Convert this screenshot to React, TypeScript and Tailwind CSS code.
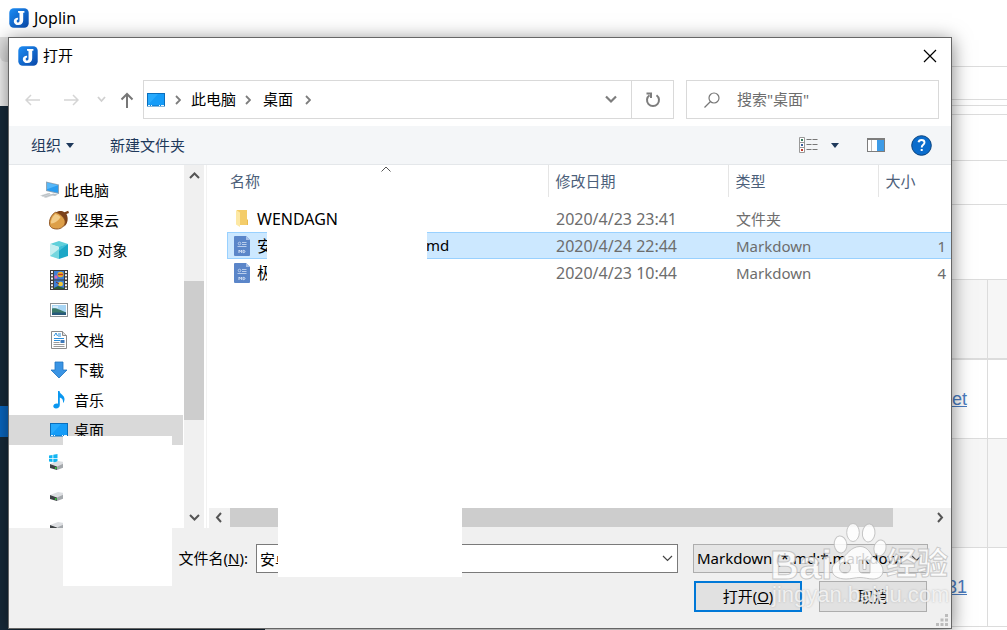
import React from "react";

const sans = "font-['Noto_Sans','Noto_Sans_CJK_SC',sans-serif]";

function JoplinIcon() {
  return (
    <svg width="20" height="20" viewBox="0 0 20 20" className="shrink-0" aria-hidden="true">
      <defs>
        <linearGradient id="jop" x1="0" y1="0" x2="1" y2="1">
          <stop offset="0" stopColor="#1c8df5" />
          <stop offset="1" stopColor="#0a48a8" />
        </linearGradient>
      </defs>
      <rect x="0.3" y="0.3" width="19.4" height="19.4" rx="4.5" fill="url(#jop)" />
      <path d="M9 3h6.400v1.800h-1.200v7.400c0 3.100-1.900 4.900-4.700 4.900-2.900 0-4.700-1.500-4.700-3.900 0-2.300 2-3.700 4.300-3.500v1.800c-.9.1-1.400.6-1.400 1.500 0 1 .6 1.500 1.400 1.500 1 0 1.400-.7 1.400-2V5.400c0-.4-.2-.6-.6-.6H9z" fill="#fff" />
    </svg>
  );
}

function DesktopIcon() {
  return (
    <svg width="18" height="14" viewBox="0 0 18 14" className="shrink-0" aria-hidden="true">
      <rect x="0.5" y="0.5" width="17" height="12.500" fill="#159cf8" stroke="#0a6ebc" />
      <path d="M1 12V1h10z" fill="#2fb0ff" opacity=".7" />
      <path d="M1 12.500h2M4 12.500h1M12 12.500h1M14 12.500h3" stroke="#e8f6ff" strokeWidth="1" />
    </svg>
  );
}

function Chevron({ d = "M1 1l4 4-4 4", w = 6, h = 10, c = "#7d7d7d", s = 1.8 }: { d?: string; w?: number; h?: number; c?: string; s?: number }) {
  return (
    <svg width={w} height={h} viewBox={`0 0 ${w} ${h}`} fill="none" stroke={c} strokeWidth={s} className="shrink-0" aria-hidden="true">
      <path d={d} />
    </svg>
  );
}

function ComputerIcon() {
  return (
    <svg width="20" height="18" viewBox="0 0 20 18" aria-hidden="true">
      <path d="M6 .5l13 3v9.500L6 10z" fill="#8fa5b6" />
      <path d="M7 1.700l11 2.600v7.500L7 9.200z" fill="#2a9df0" />
      <path d="M7 1.700l11 2.600-11 4z" fill="#58b8f8" />
      <path d="M0 14.500l8-2.500 6 2-8 3z" fill="#d3d7da" />
      <path d="M2 15l8-2.600M4.500 16l8-2.500" stroke="#aab0b5" strokeWidth=".6" />
      <path d="M13 12.500l5 1-3 1.500-4-1z" fill="#b7bfc6" />
    </svg>
  );
}

function AcornIcon() {
  return (
    <svg width="20" height="20" viewBox="0 0 20 20" className="shrink-0" aria-hidden="true">
      <path d="M6.500 2.500C9 .5 13 .3 15.500 2.200l3.700-1.400.8 2.300-2.600.9c2.200 4 1.600 9-1.900 12.500C15 10 11.500 5 6.500 2.500z" fill="#7c4119" />
      <path d="M6.500 2.300c4 .7 9.500 5.500 9.700 9.700-.3 4-3.700 7-8.200 7-4.700 0-7.600-2-7.600-6C.4 9 3 4 6.500 2.300z" fill="#dd9f48" stroke="#8a4f1d" strokeWidth=".9" />
      <path d="M6.500 4C4 6 1.700 9.500 2 13.500 5.500 14 11 9 11.500 7 10 5.500 8 4.300 6.500 4z" fill="#f3cc88" />
    </svg>
  );
}

function CubeIcon() {
  return (
    <svg width="18" height="18" viewBox="0 0 18 18" aria-hidden="true">
      <path d="M0 3l9-3 9 3-9 3z" fill="#5fd0da" />
      <path d="M0 3l9 3v12l-9-3z" fill="#c4eef0" />
      <path d="M0 15l9-7v10z" fill="#74d6de" />
      <path d="M18 3L9 6v12l9-3z" fill="#1ca7c6" />
      <path d="M18 3l-9 7V6z" fill="#3fbfd8" />
    </svg>
  );
}

function VideoIcon() {
  return (
    <svg width="18" height="20" viewBox="0 0 18 20" aria-hidden="true">
      <rect width="18" height="20" fill="#3c3c3c" />
      <path d="M2 1v18M16 1v18" stroke="#f2f2f2" strokeWidth="2" strokeDasharray="2 1.300" />
      <rect x="4" y="1" width="10" height="8.500" fill="#3f7fd6" />
      <rect x="4" y="10.500" width="10" height="8.500" fill="#3f7fd6" />
      <ellipse cx="10.500" cy="4.500" rx="3" ry="2.800" fill="#f0b722" />
      <path d="M8 4.500h5" stroke="#c7352b" strokeWidth="1.500" />
      <circle cx="6" cy="7" r="1.700" fill="#d268b4" />
      <ellipse cx="10.500" cy="14" rx="2.500" ry="2.200" fill="#f0c93a" />
      <path d="M4 18l4-2 6 2v1H4z" fill="#2a5b34" />
      <path d="M6 12l3 2" stroke="#7a2f25" />
    </svg>
  );
}

function ImageIcon() {
  return (
    <svg width="18" height="14" viewBox="0 0 18 14" aria-hidden="true">
      <rect x=".5" y=".5" width="17" height="13" fill="#fff" stroke="#8f9498" />
      <rect x="2" y="2" width="14" height="10" fill="#a8d6f5" />
      <path d="M2 5.500c4-1 7 1 14 4v2.500H2z" fill="#3b7a6a" />
      <path d="M2 10c5-1 9 0 14-.5v2.500H2z" fill="#27597b" />
      <path d="M3 4h5" stroke="#fff" />
    </svg>
  );
}

function DocIcon() {
  return (
    <svg width="16" height="18" viewBox="0 0 16 18" aria-hidden="true">
      <path d="M.5 .5h11l4 4v13H.5z" fill="#fff" stroke="#8b8b8b" />
      <path d="M11.500 .5v4h4" fill="#ddd" stroke="#8b8b8b" />
      <path d="M3 5l2-3 1.500 3M7 3h3M7 5h3M3 7.500h10M3 9.500h6" stroke="#2b8fdb" fill="none" />
      <rect x="9.500" y="9" width="4" height="3" fill="#3d79ba" />
      <path d="M2.500 11.500h6M2.500 13.500h11M2.500 15.500h11" stroke="#9a9a9a" />
    </svg>
  );
}

function DownloadIcon() {
  return (
    <svg width="18" height="18" viewBox="0 0 18 18" aria-hidden="true">
      <path d="M5 1h8v8h4l-8 8-8-8h4z" fill="#3a94e4" stroke="#1f74c0" strokeWidth=".8" />
    </svg>
  );
}

function MusicIcon() {
  return (
    <svg width="12" height="18" viewBox="0 0 12 18" aria-hidden="true">
      <path d="M5 0h1.500c.5 3.500 5 4 5 8 0 1.500-.5 3-1.500 4 .5-3-1-5-3.200-5.500V14c0 2-1.600 3.500-3.800 3.500-1.700 0-2.700-1-2.700-2.200 0-1.700 2-3.200 4.700-2.600z" fill="#0a97f0" />
    </svg>
  );
}

function DriveIcon({ win }: { win?: boolean }) {
  return (
    <svg width="22" height="18" viewBox="0 0 22 18" aria-hidden="true">
      {win && <path d="M0 1.500l3.500-.6v3.300H0zM4.300 .8L8.500 0v4.200H4.300zM0 5h3.500v3L0 7.500zM4.300 5h4.200v4l-4.200-.8z" fill="#12b5f2" />}
      <path d="M1 10l8-3 12 2-6 5z" fill="#dcdee1" />
      <path d="M1 10l7 2.500v3.500l-7-2z" fill="#3e4245" />
      <path d="M8 12.500l8-3.500v4l-8 3z" fill="#a4a8ac" />
      <circle cx="6.800" cy="14" r="1" fill="#36d13e" />
    </svg>
  );
}

function FolderIcon() {
  return (
    <svg width="13" height="17" viewBox="0 0 13 17" aria-hidden="true">
      <path d="M1 0h10v15H1z" fill="#f4cd6a" />
      <path d="M11 10l1-1v6h-1z" fill="#e9bb50" />
      <path d="M0 0l4 2.500V17l-4-2.500z" fill="#fde8a4" />
    </svg>
  );
}

function MarkdownIcon() {
  return (
    <svg width="16" height="20" viewBox="0 0 16 20" aria-hidden="true">
      <path d="M1 0h11l4 4v15a1 1 0 01-1 1H1a1 1 0 01-1-1V1a1 1 0 011-1z" fill="#5b86c9" />
      <path d="M12 0l4 4h-4z" fill="#a9c2e8" />
      <circle cx="5.500" cy="7.500" r="1.300" fill="none" stroke="#b9cdec" />
      <path d="M8 6.500h4.500M8 8.500h4.500M3.500 10.500h9" stroke="#b9cdec" />
      <path d="M5 17v-3l1.300 1.600L7.600 14v3M9 14.400v2.200h.8c1.600 0 1.600-2.200 0-2.200z" fill="none" stroke="#dbe6f7" strokeWidth=".9" />
    </svg>
  );
}

const navItems = [
  { label: "坚果云", icon: <AcornIcon /> },
  { label: "3D 对象", icon: <CubeIcon /> },
  { label: "视频", icon: <VideoIcon /> },
  { label: "图片", icon: <ImageIcon /> },
  { label: "文档", icon: <DocIcon /> },
  { label: "下载", icon: <DownloadIcon /> },
  { label: "音乐", icon: <MusicIcon /> },
  { label: "桌面", icon: <DesktopIcon />, selected: true },
];

function Sidebar() {
  return (
    <nav aria-label="文件夹" className="flex w-[198px] shrink-0 border-r border-[#f2f2f2] pr-0.5">
      <ul className="h-[363px] flex-1 overflow-hidden pt-[10px] text-[15px] leading-[30px] text-black">
        <li className="flex h-[30px] items-center gap-1 pl-[31px]">
          <ComputerIcon />
          <a href="#pc">此电脑</a>
        </li>
        {navItems.map((n) => (
          <li key={n.label} className={`mr-px flex h-[30px] items-center gap-[5px] pl-10 ${n.selected ? "bg-[#d9d9d9]" : ""}`}>
            <span className="flex w-5 justify-center">{n.icon}</span>
            <a href="#folder">{n.label}</a>
          </li>
        ))}
        <li className="flex h-8 items-center pl-10 pt-1"><DriveIcon win /></li>
        <li className="flex h-[30px] items-center pl-10 pt-1"><DriveIcon /></li>
        <li className="flex h-[30px] items-center pl-10 pt-1"><DriveIcon /></li>
      </ul>
      <div className="flex w-5 flex-col items-center bg-[#f0f0f0] py-[7px]">
        <Chevron d="M1 6l4.500-4.500L10 6" w={11} h={8} c="#555" s={2} />
        <div className="mt-[101px] h-[139px] w-full shrink-0 bg-[#cdcdcd]" />
        <div className="flex-1" />
        <Chevron d="M1 2l4.500 4.500L10 2" w={11} h={8} c="#555" s={2} />
      </div>
    </nav>
  );
}

const files = [
  { name: "WENDAGN", date: "2020/4/23 23:41", type: "文件夹", size: "", icon: <FolderIcon /> },
  { name: "安", masked: true, tail: "md", date: "2020/4/24 22:44", type: "Markdown", size: "1", icon: <MarkdownIcon />, selected: true },
  { name: "极", masked: true, date: "2020/4/23 10:44", type: "Markdown", size: "4", icon: <MarkdownIcon /> },
];

function FileList() {
  const head = "border-l border-[#e5e5e5] pl-[7px] text-left font-normal";
  return (
    <section aria-label="文件" className="flex min-w-0 flex-1 flex-col pl-0.5">
      <div className="flex-1 pl-[18px]">
        <table className="w-full table-fixed border-collapse">
          <colgroup>
            <col />
            <col className="w-[180px]" />
            <col className="w-[150px]" />
            <col className="w-[73px]" />
          </colgroup>
          <thead className="text-[15px] text-[#4c607a]">
            <tr className="h-8">
              <th className="relative pl-[3px] text-left font-normal">
                名称
                <span className="absolute left-[154px] top-px"><Chevron d="M.5 5.500L5 1l4.500 4.500" w={10} h={6} c="#555" s={1} /></span>
              </th>
              <th className={head}>修改日期</th>
              <th className={head}>类型</th>
              <th className={head}>大小</th>
            </tr>
          </thead>
          <tbody className="text-[#6d6d6d]">
            <tr className="h-2"><td colSpan={4} /></tr>
            {files.map((f) => (
              <tr key={f.date} className={`h-[27px] text-[15px] ${f.selected ? "bg-[#cce8ff] shadow-[inset_0_1px_#99d1ff,inset_0_-1px_#99d1ff,inset_1px_0_#99d1ff]" : ""}`}>
                <td className="relative p-0 text-black">
                  <span className="flex h-[26px] items-center gap-[7px] pl-[7px] text-[16px]">
                    <span className="flex w-4 justify-center">{f.icon}</span>
                    <span>{f.name}</span>
                  </span>
                  {f.masked && <span className="absolute left-10 top-0 z-10 h-[28px] w-40 bg-white" />}
                  {f.tail && <span className="absolute left-[199px] top-[2px]">{f.tail}</span>}
                </td>
                <td className="p-0 pl-2 text-[16px] leading-[26px]">{f.date}</td>
                <td className="p-0 pl-2 leading-[26px]">{f.type}</td>
                <td className="p-0 pr-[5px] text-right leading-[26px]">{f.size}</td>
              </tr>
            ))}
          </tbody>
        </table>
      </div>
      <div className="flex h-5 items-center bg-[#f0f0f0] pb-px">
        <span className="flex w-[21px] justify-center pr-px"><Chevron d="M6 1L2 5.500 6 10" w={8} h={11} c="#555" s={2} /></span>
        <div className="h-[19px] flex-1 bg-[#cdcdcd]" />
        <span className="flex w-[58px] justify-end pr-[7px]"><Chevron d="M2 1l4 4.500L2 10" w={8} h={11} c="#555" s={2} /></span>
      </div>
    </section>
  );
}

function Backdrop() {
  const line = "border-b border-[#dcdcdc]";
  return (
    <div className="flex min-h-screen flex-col bg-white">
      <header className="flex h-[37px] items-center gap-[5px] pb-0.5 pl-[9px] text-[16px] text-black">
        <JoplinIcon />
        Joplin
      </header>
      <div className="flex flex-1">
        <aside className="flex w-[265px] flex-col bg-[#172a3a]">
          <div className="h-[69px] bg-[#f5f5f5]">
            <div className="h-[25px] rounded-bl-md bg-[#e0e0e0]" />
          </div>
          <div className="mt-[300px] h-[31px] bg-[#0a68c4]" />
        </aside>
        <main className="flex flex-1 flex-col">
          <div className={`h-[30px] ${line}`} />
          <div className={`h-[33px] ${line}`} />
          <div className={`h-[6px] ${line}`} />
          <div className={`h-[9px] ${line}`} />
          <div className={`h-[46px] ${line}`} />
          <div className={`h-11 ${line}`} />
          <div className={`h-[75px] ${line}`} />
          <table className="w-full border-separate border-spacing-0 font-['Liberation_Sans',sans-serif] text-[18px] text-[#4a7cc0]">
            <tbody className="[&_td]:border-b [&_td]:border-[#dcdcdc] [&_td]:p-0 [&_td:last-child]:w-5 [&_td:last-child]:border-l">
              <tr className="h-20 bg-[#f6f6f6] [&>td]:border-b-2"><td /><td /></tr>
              <tr className="h-[79px]"><td className="text-right"><a href="#sheet" className="pr-5"><span className="underline">et</span></a></td><td /></tr>
              <tr className="h-[109px] bg-[#f6f6f6]"><td /><td /></tr>
              <tr className="h-[79px]"><td className="text-right"><a href="#item" className="pr-5"><span className="underline">31</span></a></td><td /></tr>
            </tbody>
          </table>
        </main>
      </div>
    </div>
  );
}

function Watermark() {
  const outlined = "absolute font-bold leading-[34px] [-webkit-text-stroke:1px_rgba(185,185,185,0.75)]";
  return (
    <div className="pointer-events-none absolute bottom-[20px] right-[1px] z-20 h-[88px] w-[180px] font-['Liberation_Sans','Noto_Sans_CJK_SC',sans-serif] text-white/75">
      <svg width="180" height="88" viewBox="0 0 180 88" className="absolute inset-0" aria-hidden="true">
        <g fill="#fff" fillOpacity=".82" stroke="#b9b9b9" strokeOpacity=".8">
          <ellipse cx="70.500" cy="24.500" rx="6.300" ry="8.500" transform="rotate(-8 70.500 24.500)" />
          <ellipse cx="83" cy="12.500" rx="6.300" ry="9" />
          <ellipse cx="98.700" cy="13" rx="6.300" ry="9" transform="rotate(6 98.700 13)" />
          <ellipse cx="110" cy="28" rx="6" ry="8" transform="rotate(15 110 28)" />
          <path fillRule="evenodd" d="M90 26.500c6 0 9 4 12 9s11 8 11 15c0 6-5 8.500-10 8.500-5 0-8-1.500-13-1.500s-9 1.500-14 1.500c-8 0-14-3-14-9.500 0-6 6-8 10-11s9-12 18-12zM75 42c-4 0-5.500 2.500-5.500 5.500S71 53 75 53s5.500-2.500 5.500-5.500S79 42 75 42zM89 40v9c0 3 1.500 4 4 4h7V40h-4v9.500h-3V40z" />
        </g>
      </svg>
      <span className={`${outlined} left-0 top-[28px] text-[40px]`}>Bai</span>
      <span className={`${outlined} left-[116px] top-[27px] text-[31px]`}>经验</span>
      <span className="absolute left-[2px] top-[63px] text-[22px] leading-[24px] [text-shadow:0_0_2px_rgba(170,170,170,0.8)]">jingyan.baidu.com</span>
    </div>
  );
}

export default function App() {
  return (
    <div className={`relative min-h-screen overflow-hidden ${sans}`}>
      <Backdrop />
      <div role="dialog" aria-label="打开" className="absolute left-2 right-[55px] top-[37px] flex flex-col border border-[#666] bg-white shadow-[0_3px_18px_rgba(0,0,0,0.5)]">
        <div className="flex h-[37px] items-center gap-[5px] pb-0.5 pl-[9px] pr-[14px] text-[15px] text-black">
          <JoplinIcon />
          <h1 className="flex-1">打开</h1>
          <button aria-label="关闭">
            <svg width="14" height="14" viewBox="0 0 14 14" stroke="#000" strokeWidth="1.200" aria-hidden="true"><path d="M1 1l12 12M13 1L1 13" /></svg>
          </button>
        </div>

        <div className="flex items-center px-3 pb-[7px] pt-[5px] text-[15px] text-black">
          <div className="flex w-[122px] items-center pl-1">
            <button aria-label="后退" className="w-[38px]"><svg width="16" height="12" viewBox="0 0 16 12" fill="none" stroke="#d5d5d5" strokeWidth="1.500" aria-hidden="true"><path d="M15 6H1.500M6 1L1 6l5 5" /></svg></button>
            <button aria-label="前进" className="w-[34px]"><svg width="16" height="12" viewBox="0 0 16 12" fill="none" stroke="#d5d5d5" strokeWidth="1.500" aria-hidden="true"><path d="M1 6h13.500M10 1l5 5-5 5" /></svg></button>
            <button aria-label="最近位置" className="w-[23px]"><Chevron d="M1 1l3.500 4L8 1" w={9} h={7} c="#d0d0d0" s={1.800} /></button>
            <button aria-label="上移"><svg width="14" height="16" viewBox="0 0 14 16" fill="none" stroke="#777" strokeWidth="2" aria-hidden="true"><path d="M7 16V2M1.500 7.500L7 2l5.500 5.500" /></svg></button>
          </div>
          <div className="flex h-[39px] flex-1 items-center border border-[#d9d9d9] pl-[3px]">
            <DesktopIcon />
            <span className="mx-[10px]"><Chevron /></span>
            <a href="#pc">此电脑</a>
            <span className="ml-[9px] mr-3"><Chevron /></span>
            <a href="#desktop">桌面</a>
            <span className="ml-3 flex-1"><Chevron /></span>
            <button aria-label="展开" className="px-[14px]"><Chevron d="M1 1.500l5 5 5-5" w={12} h={9} s={2.200} /></button>
            <button aria-label="刷新" className="flex h-full w-[42px] items-center justify-center border-l border-[#d9d9d9]">
              <svg width="16" height="16" viewBox="0 0 16 16" fill="none" stroke="#7d7d7d" strokeWidth="2" aria-hidden="true"><path d="M4.500 3.200A6 6 0 1 0 11.500 3.200M1.500 1.500h4.500v4.500" /></svg>
            </button>
          </div>
          <label className="ml-3 flex h-[39px] w-[253px] items-center gap-[17px] border border-[#d9d9d9] pl-[17px]">
            <svg width="16" height="16" viewBox="0 0 16 16" fill="none" stroke="#777" strokeWidth="1.200" aria-hidden="true"><circle cx="10" cy="6" r="5" /><path d="M6.500 9.500L.5 15.500" /></svg>
            <input aria-label="搜索" placeholder={'搜索"桌面"'} className="min-w-0 flex-1 outline-none placeholder:text-[#6d6d6d]" />
          </label>
        </div>

        <div className="flex h-[39px] items-center border-b border-[#e4e7ea] bg-[#f4f6f8] pl-[22px] pr-[19px] text-[15px] text-[#1e395b]">
          <button className="flex items-center gap-[5px]">组织 <svg width="8" height="5" viewBox="0 0 8 5" aria-hidden="true"><path d="M0 0h8L4 5z" fill="#1e395b" /></svg></button>
          <button className="ml-9 mr-auto">新建文件夹</button>
          <button aria-label="视图" className="flex items-center gap-[13px]">
            <svg width="19" height="16" viewBox="0 0 19 16" fill="none" aria-hidden="true">
              <path d="M.5 .5h5v15h-5zM.5 5.500h5M.5 10.500h5" stroke="#999" fill="#fff" />
              <path d="M2 3h2" stroke="#3a7a5c" strokeWidth="2" /><path d="M2 8h2" stroke="#3a5f9c" strokeWidth="2" /><path d="M2 13h2" stroke="#c0392b" strokeWidth="2" />
              <path d="M7.500 2.500h11M7.500 7.500h11M7.500 12.500h11" stroke="#777" strokeDasharray="5 1" />
            </svg>
            <svg width="8" height="5" viewBox="0 0 8 5" aria-hidden="true"><path d="M0 0h8L4 5z" fill="#1e395b" /></svg>
          </button>
          <button aria-label="预览窗格" className="ml-7">
            <svg width="18" height="14" viewBox="0 0 18 14" aria-hidden="true"><rect x=".5" y=".5" width="17" height="13" fill="#fff" stroke="#7d7d7d" /><path d="M0 1h18" stroke="#7d7d7d" strokeWidth="2" /><path d="M4.500 2v11" stroke="#bbb" /><rect x="10" y="2" width="7" height="11" fill="#3e9be6" /></svg>
          </button>
          <button aria-label="帮助" className="ml-[26px]">
            <svg width="21" height="21" viewBox="0 0 21 21" aria-hidden="true"><circle cx="10.500" cy="10.500" r="9.800" fill="#0a6ccc" stroke="#08427e" /><path d="M7.500 7.300c.3-1.600 1.500-2.300 3-2.300 1.800 0 3 1 3 2.500 0 2.300-2.800 2.300-2.800 4.900" fill="none" stroke="#fff" strokeWidth="1.900" /><rect x="9.700" y="14" width="2" height="2" fill="#fff" /></svg>
          </button>
        </div>

        <div className="flex h-[363px]">
          <Sidebar />
          <FileList />
        </div>

        <div className="flex h-[100px] flex-col gap-2 bg-[#f0f0f0] pr-[23px] pt-4 text-[15px] text-black">
          <div className="flex items-center">
            <label htmlFor="filename" className="w-[247px] pr-2 text-right">文件名(<u>N</u>):</label>
            <div className="relative flex flex-1">
              <input id="filename" defaultValue="安卓" className="h-[29px] w-full border border-[#7a7a7a] bg-white pl-[3px] outline-none" />
              <span className="absolute right-[5px] top-[11px]"><Chevron d="M1 1l4.500 4.500L10 1" w={11} h={8} c="#444" s={1.200} /></span>
            </div>
            <div className="relative ml-[15px] w-[235px]">
              <select aria-label="文件类型" className="h-[29px] w-full appearance-none border border-[#adadad] bg-[#e5e5e5] pl-[3px] pr-6 outline-none">
                <option>Markdown (*.md;*.markdown)</option>
              </select>
              <span className="absolute right-[6px] top-[11px]"><Chevron d="M1 1l4.500 4.500L10 1" w={11} h={8} c="#444" s={1.200} /></span>
            </div>
          </div>
          <div className="flex justify-end gap-[17px]">
            <button className="h-[31px] w-[108px] border-2 border-[#0078d7] bg-[#e1e1e1]">打开(<u>O</u>)</button>
            <button className="mr-px h-[31px] w-[108px] border border-[#adadad] bg-[#e1e1e1]">取消</button>
          </div>
        </div>

        <svg width="12" height="12" viewBox="0 0 12 12" className="absolute bottom-[2px] right-[3px]" fill="#bcbcbc" aria-hidden="true">
          <path d="M9 0h3v3H9zM9 4.500h3v3H9zM4.500 4.500h3v3h-3zM9 9h3v3H9zM4.500 9h3v3h-3zM0 9h3v3H0z" />
        </svg>

        <div className="absolute left-[54px] top-[398px] h-[150px] w-[109px] bg-white" />
        <div className="absolute left-[269px] top-[462px] h-[77px] w-[184px] bg-white" />
        <Watermark />
      </div>
    </div>
  );
}
